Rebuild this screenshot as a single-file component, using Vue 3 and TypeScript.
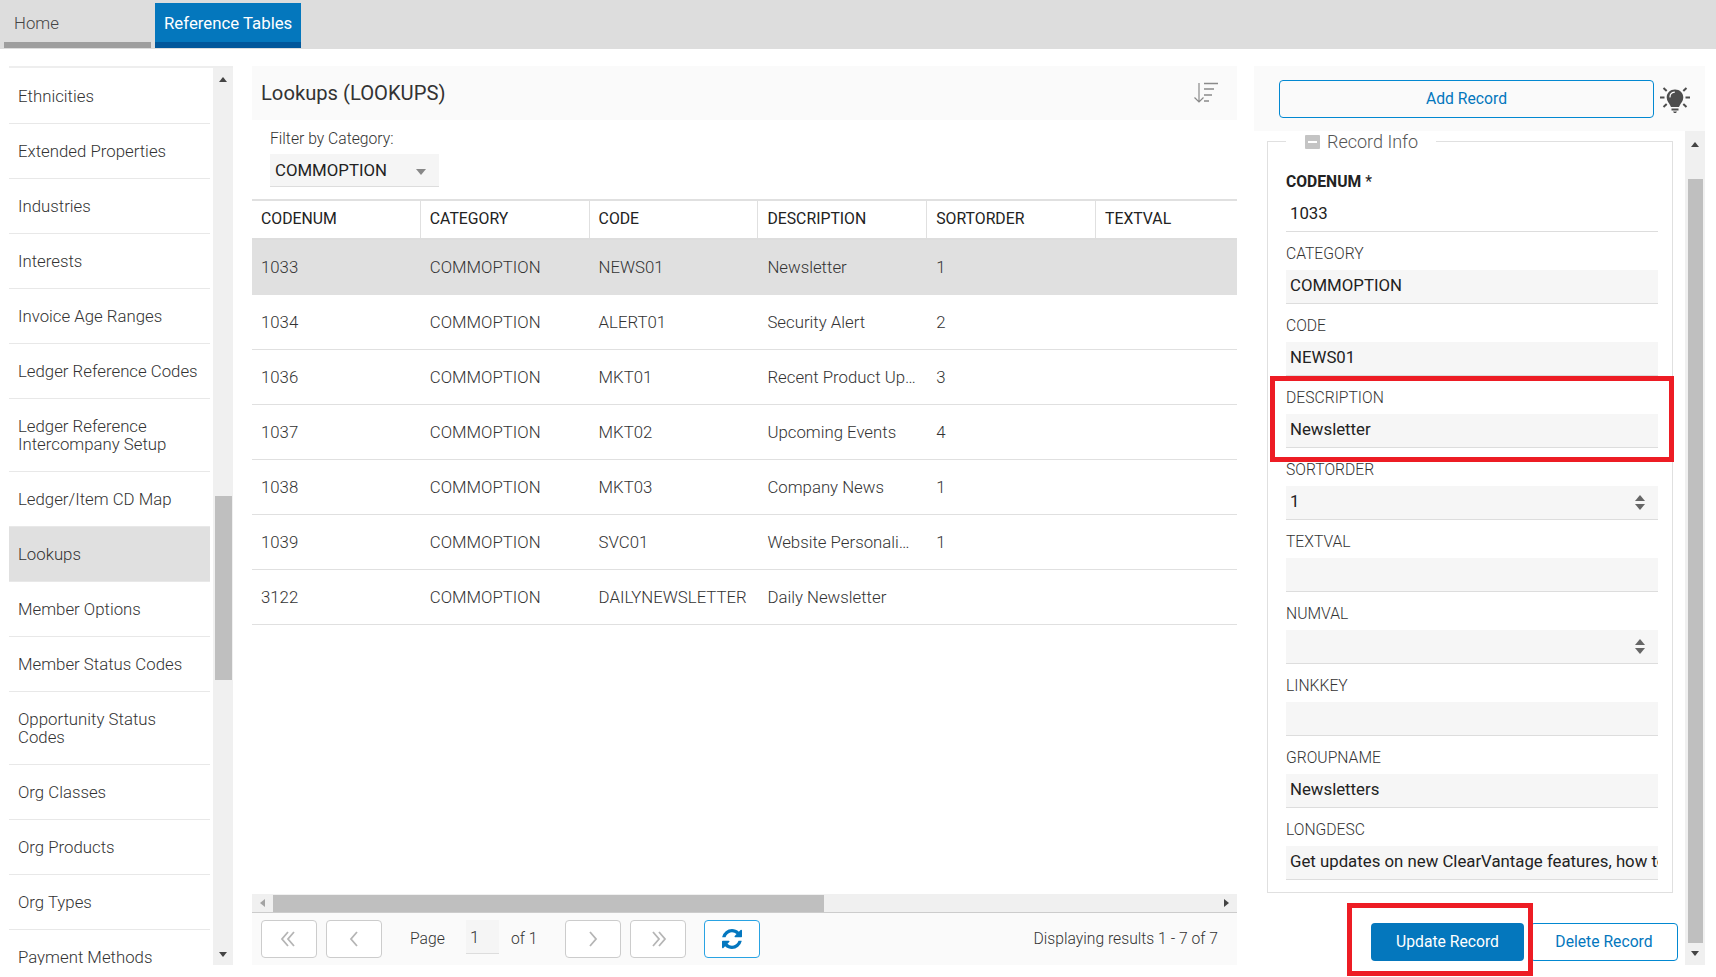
<script setup lang="ts">
interface Row { codenum: string; code: string; description: string; sortorder: string }
interface Field { label: string; value: string; required?: boolean; plain?: boolean; spinner?: boolean }

const menu: string[] = [
  'Ethnicities', 'Extended Properties', 'Industries', 'Interests', 'Invoice Age Ranges',
  'Ledger Reference Codes', 'Ledger Reference Intercompany Setup', 'Ledger/Item CD Map', 'Lookups',
  'Member Options', 'Member Status Codes', 'Opportunity Status Codes', 'Org Classes', 'Org Products',
  'Org Types', 'Payment Methods',
]
const columns: string[] = ['CODENUM', 'CATEGORY', 'CODE', 'DESCRIPTION', 'SORTORDER', 'TEXTVAL']
const rows: Row[] = [
  { codenum: '1033', code: 'NEWS01', description: 'Newsletter', sortorder: '1' },
  { codenum: '1034', code: 'ALERT01', description: 'Security Alert', sortorder: '2' },
  { codenum: '1036', code: 'MKT01', description: 'Recent Product Updates', sortorder: '3' },
  { codenum: '1037', code: 'MKT02', description: 'Upcoming Events', sortorder: '4' },
  { codenum: '1038', code: 'MKT03', description: 'Company News', sortorder: '1' },
  { codenum: '1039', code: 'SVC01', description: 'Website Personalization', sortorder: '1' },
  { codenum: '3122', code: 'DAILYNEWSLETTER', description: 'Daily Newsletter', sortorder: '' },
]
const fields: Field[] = [
  { label: 'CODENUM', value: '1033', required: true, plain: true },
  { label: 'CATEGORY', value: 'COMMOPTION' },
  { label: 'CODE', value: 'NEWS01' },
  { label: 'DESCRIPTION', value: 'Newsletter' },
  { label: 'SORTORDER', value: '1', spinner: true },
  { label: 'TEXTVAL', value: '' },
  { label: 'NUMVAL', value: '', spinner: true },
  { label: 'LINKKEY', value: '' },
  { label: 'GROUPNAME', value: 'Newsletters' },
  { label: 'LONGDESC', value: 'Get updates on new ClearVantage features, how to get the most from them' },
]
</script>

<template>
  <div class="page">
    <header class="tabs">
      <div class="tab">Home</div>
      <div class="tab active">Reference Tables</div>
    </header>

    <div class="content">
      <aside class="side">
        <div class="side-inner">
          <ul class="menu">
            <li v-for="item in menu" :key="item" class="menu-item" :class="{ selected: item === 'Lookups' }">
              <span class="menu-text">{{ item }}</span>
            </li>
          </ul>
          <div class="vbar side-bar">
            <i class="arrow up"></i>
            <div class="side-thumb"></div>
            <i class="arrow down"></i>
          </div>
        </div>
      </aside>

      <main class="main">
        <div class="title-bar">
          <h1 class="title">Lookups (LOOKUPS)</h1>
          <svg class="sort-icon" width="26" height="22" viewBox="0 0 26 22" fill="none" stroke="#8a8a8a">
            <path d="M6 1v19M1.500 15.500 6 20l4.500-4.500" stroke-width="1.200" />
            <path d="M11 1.500h14M11 7h10M11 13h8M11 19h5" stroke-width="1.300" />
          </svg>
        </div>
        <div class="filter">
          <label class="filter-label">Filter by Category:</label>
          <div class="select">
            <span>COMMOPTION</span>
            <i class="caret"></i>
          </div>
        </div>

        <div class="table">
          <div class="thead">
            <div v-for="c in columns" :key="c" class="th">{{ c }}</div>
          </div>
          <div v-for="(r, i) in rows" :key="r.codenum" class="tr" :class="{ current: i === 0 }">
            <div class="td">{{ r.codenum }}</div>
            <div class="td">COMMOPTION</div>
            <div class="td">{{ r.code }}</div>
            <div class="td">{{ r.description }}</div>
            <div class="td">{{ r.sortorder }}</div>
            <div class="td"></div>
          </div>
        </div>

        <div class="hbar">
          <i class="arrow left dim"></i>
          <div class="hthumb"></div>
          <i class="arrow right"></i>
        </div>
        <div class="pager">
          <button class="pbtn" type="button" aria-label="First">
            <svg width="20" height="18" viewBox="0 0 20 18" fill="none" stroke="#b5b5b5" stroke-width="1.800"><path d="M9 2 3 9l6 7M15 2 9 9l6 7" /></svg>
          </button>
          <button class="pbtn" type="button" aria-label="Previous">
            <svg width="20" height="18" viewBox="0 0 20 18" fill="none" stroke="#b5b5b5" stroke-width="1.800"><path d="M13 2 7 9l6 7" /></svg>
          </button>
          <span class="page-label">Page</span>
          <span class="page-input">1</span>
          <span class="page-of">of 1</span>
          <button class="pbtn" type="button" aria-label="Next">
            <svg width="20" height="18" viewBox="0 0 20 18" fill="none" stroke="#b5b5b5" stroke-width="1.800"><path d="m7 2 6 7-6 7" /></svg>
          </button>
          <button class="pbtn" type="button" aria-label="Last">
            <svg width="20" height="18" viewBox="0 0 20 18" fill="none" stroke="#b5b5b5" stroke-width="1.800"><path d="m5 2 6 7-6 7M11 2l6 7-6 7" /></svg>
          </button>
          <button class="pbtn refresh" type="button" aria-label="Refresh">
            <svg width="20" height="20" viewBox="128 128 1536 1536" fill="#0477bf"><path d="M1639 1056q0 5-1 7-64 268-268 434.500t-478 166.500q-146 0-282.500-55t-243.500-157l-129 129q-19 19-45 19t-45-19-19-45v-448q0-26 19-45t45-19h448q26 0 45 19t19 45-19 45l-137 137q71 66 161 102t187 36q134 0 250-65t186-179q11-17 53-117 8-23 30-23h192q13 0 22.500 9.500t9.500 22.500zm25-800v448q0 26-19 45t-45 19h-448q-26 0-45-19t-19-45 19-45l138-138q-148-137-349-137-134 0-250 65t-186 179q-11 17-53 117-8 23-30 23h-199q-13 0-22.500-9.500t-9.500-22.500v-7q65-268 270-434.500t480-166.500q146 0 284 55.500t245 156.500l130-129q19-19 45-19t45 19 19 45z" /></svg>
          </button>
          <span class="results">Displaying results 1 - 7 of 7</span>
        </div>
      </main>

      <section class="record">
        <div class="record-top">
          <button class="add" type="button">Add Record</button>
          <svg class="bulb" width="32" height="32" viewBox="0 0 32 32">
            <path d="M16 6.500c-4.800 0-8.300 3.500-8.300 8 0 3.600 2.500 5.600 3.700 8.200.3.700.6 1.300 1.200 1.300h6.800c.6 0 .9-.6 1.200-1.300 1.200-2.600 3.700-4.600 3.700-8.200 0-4.500-3.500-8-8.300-8z" fill="#4d4d4d" />
            <path d="M11 14c0-2.600 2-4.600 4.400-4.900" fill="none" stroke="#fff" stroke-width="1.200" stroke-linecap="round" />
            <path d="M12.500 25.400h7v2h-7zM14 28.400h4l-1 1.600h-2z" fill="#4d4d4d" />
            <path d="M1 14.500h4.500M26.500 14.500H31M4.500 5l3.200 3M27.500 5l-3.200 3M4.500 24l3.200-3M27.500 24l-3.200-3" stroke="#4d4d4d" stroke-width="2" fill="none" />
          </svg>
        </div>
        <div class="record-body">
          <div class="form-col">
            <fieldset class="info">
              <legend class="legend">
                <i class="collapse"></i>
                <span>Record Info</span>
              </legend>
              <div v-for="f in fields" :key="f.label" class="field">
                <div class="field-label" :class="{ strong: f.required }">
                  {{ f.label }}<span v-if="f.required" class="req"> *</span>
                </div>
                <div class="input" :class="{ plain: f.plain }">
                  <span class="input-text">{{ f.value }}</span>
                  <span v-if="f.spinner" class="spin"><i class="arrow up"></i><i class="arrow down"></i></span>
                </div>
              </div>
            </fieldset>
            <div class="actions">
              <button class="primary" type="button">Update Record</button>
              <button class="secondary" type="button">Delete Record</button>
            </div>
          </div>
          <div class="vbar form-bar">
            <i class="arrow up"></i>
            <div class="form-thumb"></div>
            <i class="arrow down"></i>
          </div>
        </div>
      </section>
    </div>

    <div class="mark mark-desc"></div>
    <div class="mark mark-update"></div>
  </div>
</template>

<style>
html, body { margin: 0; background: #fff; }
</style>

<style scoped>
* { box-sizing: border-box; }
.page {
  position: relative;
  width: 1716px;
  height: 977px;
  overflow: hidden;
  background: #fff;
  font-family: Roboto, "Liberation Sans", sans-serif;
  font-size: 16.800px;
  color: #444;
  display: flex;
  flex-direction: column;
}
.tabs {
  flex: none;
  height: 49px;
  background: #ddd;
  display: flex;
  padding: 3px 0 1px 4px;
  gap: 4px;
}
.tab {
  width: 147px;
  padding-left: 10px;
  line-height: 41px;
  font-size: 16.800px;
  font-weight: 300;
  color: #444;
  border-bottom: 6px solid #9e9e9e;
}
.tab.active {
  width: 146px;
  padding-left: 9px;
  background: #0477bd;
  border-bottom-color: #01579b;
  color: #fff;
  font-weight: 400;
}
.content {
  flex: none;
  height: 899px;
  margin-top: 17px;
  display: flex;
  padding-left: 9px;
}
.side {
  flex: none;
  width: 224px;
  margin-right: 19px;
  border-top: 2px solid #eee;
}
.side-inner { height: 100%; display: flex; }
.menu {
  list-style: none;
  margin: 0;
  padding: 1px 0 0;
  width: 201px;
  height: 100%;
  overflow: hidden;
}
.menu-item {
  padding: 0 9px;
  min-height: 55px;
  display: flex;
  align-items: center;
  font-weight: 300;
  color: #333;
  line-height: 18px;
  border-bottom: 1px solid #e8e8e8;
}
.menu-item .menu-text { display: block; padding: 18px 0; }
.menu-item.selected { background: #e0e0e0; }
.vbar {
  background: #f0f0f0;
  display: flex;
  flex-direction: column;
  align-items: center;
  position: relative;
}
.side-bar { flex: none; width: 20px; margin-left: 3px; padding-top: 9px; }
.side-thumb { width: 17px; height: 184px; margin-top: 414px; background: #bfbfbf; }
.side-bar .down { margin-top: auto; margin-bottom: 8px; }
.arrow { display: block; width: 0; height: 0; border-style: solid; border-color: transparent; }
.arrow.up { border-width: 0 4.500px 5px; border-bottom-color: #444; }
.arrow.down { border-width: 5px 4.500px 0; border-top-color: #444; }
.arrow.left { border-width: 4.500px 5px 4.500px 0; border-right-color: #444; }
.arrow.right { border-width: 4.500px 0 4.500px 5px; border-left-color: #444; }
.arrow.dim { opacity: 0.45; }

.main {
  flex: none;
  width: 985px;
  margin-right: 17px;
  display: flex;
  flex-direction: column;
}
.title-bar {
  flex: none;
  height: 54px;
  background: #fafafa;
  display: flex;
  align-items: center;
  justify-content: space-between;
  padding: 0 18px 0 9px;
}
.title { margin: 0; font-size: 20.200px; font-weight: 400; color: #333; }
.filter { flex: none; height: 79px; padding: 9px 0 0 18px; }
.filter-label { display: block; font-size: 15.700px; font-weight: 300; color: #333; line-height: 20px; }
.select {
  margin-top: 5px;
  width: 169px;
  height: 33px;
  background: #f5f5f5;
  border-bottom: 1px solid #ddd;
  padding: 0 13px 0 5px;
  display: flex;
  align-items: center;
  justify-content: space-between;
  color: #222;
}
.caret {
  display: block;
  margin-top: 4px;
  width: 0;
  height: 0;
  border-style: solid;
  border-width: 6px 5.500px 0;
  border-color: #888 transparent transparent;
}
.table { flex: 1; min-height: 0; }
.thead {
  display: flex;
  height: 41px;
  border-top: 2px solid #e0e0e0;
  border-bottom: 2px solid #ddd;
}
.th {
  flex: none;
  width: 168.800px;
  padding: 0 9px;
  line-height: 36px;
  font-size: 15.800px;
  color: #222;
  border-right: 1px solid #e0e0e0;
}
.th:last-child { border-right: 0; flex: 1; }
.tr { display: flex; height: 55px; border-bottom: 1px solid #e0e0e0; }
.tr.current { background: #e0e0e0; }
.td {
  flex: none;
  width: 168.800px;
  padding: 0 10px 0 9px;
  line-height: 54px;
  font-weight: 300;
  color: #333;
  white-space: nowrap;
  overflow: hidden;
  text-overflow: ellipsis;
}
.td:last-child { flex: 1; }
.hbar {
  flex: none;
  height: 18px;
  background: #f0f0f0;
  display: flex;
  align-items: center;
  padding: 0 8px;
}
.hthumb { width: 551px; height: 17px; background: #bfbfbf; margin-left: 8px; }
.hbar .right { margin-left: auto; }
.pager {
  flex: none;
  height: 53px;
  border-top: 1px solid #ccc;
  background: #fafafa;
  display: flex;
  align-items: flex-start;
  padding: 7px 19px 0 9px;
  font-size: 15.700px;
  font-weight: 300;
  color: #333;
}
.pbtn {
  flex: none;
  width: 56px;
  height: 38px;
  margin-right: 9px;
  background: #fff;
  border: 1px solid #ccc;
  border-radius: 4px;
  padding: 0;
  display: flex;
  align-items: center;
  justify-content: center;
}
.refresh { margin-left: 9px; margin-right: 0; border-color: #29a3e3; }
.page-label { line-height: 38px; width: 56px; margin-left: 19px; }
.page-input {
  width: 33px;
  height: 34px;
  line-height: 34px;
  padding-left: 4px;
  background: #f5f5f5;
  border-bottom: 1px solid #ddd;
  font-size: 16.800px;
}
.page-of { line-height: 38px; margin-left: 12px; width: 54px; }
.results { margin-left: auto; line-height: 38px; }

.record {
  flex: none;
  width: 451px;
  display: flex;
  flex-direction: column;
}
.record-top {
  flex: none;
  height: 65px;
  background: #fafafa;
  display: flex;
  align-items: flex-start;
  padding: 14px 0 0 25px;
}
.add {
  width: 375px;
  height: 38px;
  padding: 0 0 2px;
  background: #fafafa;
  border: 1px solid #0288d1;
  border-radius: 4px;
  color: #0477bd;
  font: 400 15.700px Roboto, "Liberation Sans", sans-serif;
}
.bulb { margin-left: 5px; margin-top: 3px; }
.record-body { flex: 1; min-height: 0; display: flex; }
.form-col { flex: none; width: 431px; padding-left: 13px; }
.info {
  margin: 0;
  width: 406px;
  min-width: 0;
  padding: 20px 14px 1px 18px;
  border: 1px solid #e0e0e0;
  height: 762px;
}
.legend {
  padding: 1px 18px 0 19px;
  font-size: 18px;
  font-weight: 300;
  line-height: 20px;
  color: #555;
  display: flex;
  align-items: center;
}
.collapse {
  display: block;
  width: 15px;
  height: 14px;
  margin-right: 7px;
  background: linear-gradient(#fff, #fff) center / 9px 2px no-repeat #c4c4c4;
  border-radius: 1px;
}
.field { margin-bottom: 12px; }
.field-label { line-height: 20px; font-size: 15.700px; font-weight: 300; color: #333; margin-bottom: 6px; }
.field-label.strong { font-weight: 700; color: #222; }
.req { font-weight: 400; }
.input {
  height: 34px;
  background: #f6f6f6;
  border-bottom: 1px solid #ddd;
  padding: 0 0 3px 4px;
  display: flex;
  align-items: center;
  justify-content: space-between;
  color: #222;
  overflow: hidden;
  line-height: 30px;
}
.input.plain { background: #fff; }
.input-text { flex: 1; white-space: nowrap; overflow: hidden; }
.spin { flex: none; display: flex; flex-direction: column; gap: 3px; margin: 3px 13px 0 0; }
.spin .arrow.up { border-width: 0 5.500px 6px; border-bottom-color: #666; }
.spin .arrow.down { border-width: 6px 5.500px 0; border-top-color: #666; }
.actions {
  display: flex;
  justify-content: flex-end;
  gap: 6px;
  margin-top: 30px;
  padding-right: 7px;
}
.primary, .secondary {
  height: 38px;
  padding: 0 0 2px;
  border-radius: 4px;
  font: 400 15.700px Roboto, "Liberation Sans", sans-serif;
}
.primary { width: 153px; background: #0477bd; border: 0; color: #fff; }
.secondary { width: 148px; background: #fff; border: 1px solid #0288d1; color: #0477bd; }
.form-bar { flex: none; width: 20px; height: 834px; padding-top: 11px; }
.form-thumb { width: 15px; height: 764px; margin-top: 32px; background: #bfbfbf; }
.form-bar .down { margin-top: 8px; }
.mark { position: absolute; border: 5px solid #ed1c24; pointer-events: none; }
.mark-desc { left: 1270px; top: 376px; width: 404px; height: 86px; }
.mark-update { left: 1347px; top: 903px; width: 186px; height: 73px; }
</style>
